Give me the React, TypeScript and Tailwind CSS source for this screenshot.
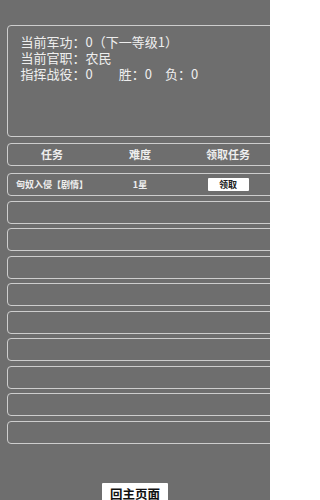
import React from "react";

const rows = [
  { name: "匈奴入侵【剧情】", level: "1星" },
  null,
  null,
  null,
  null,
  null,
  null,
  null,
  null,
  null,
];

const App: React.FC = () => {
  return (
    <div
      className="w-[270px] h-[500px] bg-[#6e6e6e] overflow-hidden pl-[7px] pt-[25px] text-[#eeeeee]"
      style={{ fontFamily: '"Noto Sans CJK SC", "Noto Sans", sans-serif' }}
    >
      <div className="w-[280px] h-[112px] border-[1.5px] border-[#cdcdcd] rounded-[4px] pt-[8px] pl-[12.5px] text-[13px] leading-[16px]">
        <div className="whitespace-pre">当前军功：0（下一等级1）</div>
        <div className="whitespace-pre">当前官职：农民</div>
        <div className="whitespace-pre">指挥战役：0　　胜：0　负：0</div>
      </div>
      <div className="mt-[6px] w-[280px] h-[23px] border-[1.5px] border-[#cdcdcd] rounded-[4px] grid grid-cols-[88px_88px_88px] items-center text-[11px] font-bold">
        <div className="text-center">任务</div>
        <div className="text-center">难度</div>
        <div className="text-center">领取任务</div>
      </div>
      <div className="mt-[7px] flex flex-col gap-[4.5px]">
        {rows.map((r, i) => (
          <div
            key={i}
            className="w-[280px] h-[23px] border-[1.5px] border-[#cdcdcd] rounded-[4px] grid grid-cols-[88px_88px_88px] items-center text-[9px] font-bold"
          >
            {r && (
              <>
                <div className="text-center whitespace-nowrap">{r.name}</div>
                <div className="text-center">{r.level}</div>
                <div className="flex justify-center">
                  <button className="w-[41px] h-[13px] bg-white text-[#222] text-[9px] font-bold leading-[13px] rounded-[1px]">
                    领取
                  </button>
                </div>
              </>
            )}
          </div>
        ))}
      </div>
      <div className="mt-[39px] flex justify-center pr-[7px]">
        <button className="w-[66px] h-[22px] bg-white text-[#111] text-[12.5px] font-bold rounded-[1px] leading-[20px]">
          回主页面
        </button>
      </div>
    </div>
  );
};

export default App;
